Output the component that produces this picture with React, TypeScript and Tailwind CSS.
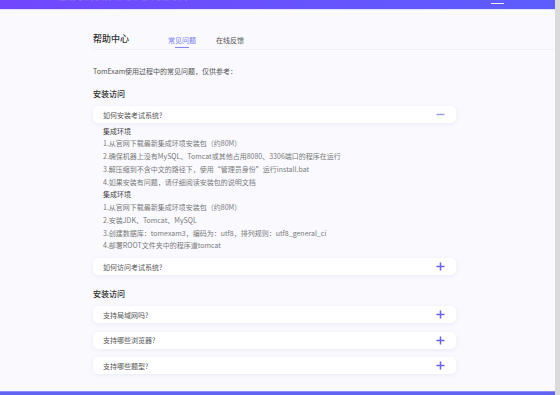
import React from "react";

const font = { fontFamily: '"Noto Sans CJK SC", "Noto Sans", sans-serif' };

function Plus() {
  return (
    <svg width="9" height="9" viewBox="0 0 9 9" className="shrink-0">
      <path d="M4.5 0.5v8M0.5 4.5h8" stroke="#6464f0" strokeWidth="1.5" />
    </svg>
  );
}

function Minus() {
  return (
    <svg width="9" height="9" viewBox="0 0 9 9" className="shrink-0">
      <path d="M0.5 4.5h8" stroke="#9c9cf4" strokeWidth="1.5" />
    </svg>
  );
}

function Card({ q, open }: { q: string; open?: boolean }) {
  return (
    <div className="w-[363px] h-[17px] bg-white rounded-[5px] shadow-[0_1px_4px_rgba(110,110,170,0.1)] pl-[10px] pr-[11px] flex items-center justify-between">
      <span className="text-[7px] leading-[10px] text-[#555]">{q}</span>
      {open ? <Minus /> : <Plus />}
    </div>
  );
}

const lines1 = [
  "1.从官网下载最新集成环境安装包（约80M）",
  "2.确保机器上没有MySQL、Tomcat或其他占用8080、3306端口的程序在运行",
  "3.解压缩到不含中文的路径下，使用“管理员身份”运行install.bat",
  "4.如果安装有问题，请仔细阅读安装包的说明文档",
];
const lines2 = [
  "1.从官网下载最新集成环境安装包（约80M）",
  "2.安装JDK、Tomcat、MySQL",
  "3.创建数据库：tomexam3，编码为：utf8，排列规则：utf8_general_ci",
  "4.部署ROOT文件夹中的程序道tomcat",
];

export default function App() {
  return (
    <div className="w-[560px] h-[395px] flex overflow-hidden bg-[#f9f9fe]" style={font}>
      <div className="flex-1 min-w-0 flex flex-col">
        <div className="h-[9px] shrink-0 overflow-hidden flex items-start bg-gradient-to-r from-[#7246fd] to-[#5c5dfd]">
          <span className="ml-[14px] -mt-[8.5px] text-[9px] leading-[9px] text-white/20 whitespace-nowrap">
            TomExam 在线考试系统 帮助中心 网络考试
          </span>
          <div className="ml-auto mr-[51px] mt-[2.5px] w-[13px] h-[1px] bg-white/90" />
        </div>
        <div className="h-px shrink-0 bg-[#e6e1fb]" />
        <div className="flex-1 min-h-0 pl-[93px] flex flex-col">
          <div className="h-[40px] shrink-0 flex items-end border-b border-[#efeff6]">
            <span className="text-[9px] leading-[12px] pb-[4px] text-[#333] font-medium">帮助中心</span>
            <div className="ml-[39px] flex flex-col items-center pb-[1px]">
              <span className="text-[7px] leading-[10px] text-[#7c7cf2]">常见问题</span>
              <div className="mt-[1.5px] w-[14px] h-[1.5px] bg-[#8586f4]" />
            </div>
            <div className="ml-[20px] flex flex-col items-center pb-[4px]">
              <span className="text-[7px] leading-[10px] text-[#555]">在线反馈</span>
            </div>
          </div>
          <div className="mt-[16px] text-[7px] leading-[10px] text-[#555]">
            TomExam使用过程中的常见问题，仅供参考：
          </div>
          <div className="mt-[11.5px] text-[8px] leading-[11px] text-[#333] font-medium">安装访问</div>
          <div className="mt-[7.5px]">
            <Card q="如何安装考试系统?" open />
          </div>
          <div className="pl-[10px] pt-[1.6px] flex flex-col">
            <div className="h-[12.75px] flex items-center text-[7px] text-[#444]">集成环境</div>
            {lines1.map((l) => (
              <div key={l} className="h-[12.75px] flex items-center text-[7px] text-[#7a7a7a] whitespace-nowrap">{l}</div>
            ))}
            <div className="h-[12.75px] flex items-center text-[7px] text-[#444]">集成环境</div>
            {lines2.map((l) => (
              <div key={l} className="h-[12.75px] flex items-center text-[7px] text-[#7a7a7a] whitespace-nowrap">{l}</div>
            ))}
          </div>
          <div className="mt-[6px]">
            <Card q="如何访问考试系统?" />
          </div>
          <div className="mt-[12.5px] text-[8px] leading-[11px] text-[#333] font-medium">安装访问</div>
          <div className="mt-[7.5px] flex flex-col gap-[8.5px]">
            <Card q="支持局域网吗?" />
            <Card q="支持哪些浏览器?" />
            <Card q="支持哪些题型?" />
          </div>
        </div>
        <div className="shrink-0 h-px bg-[#8b8cf8]" />
        <div className="shrink-0 h-[3px] bg-[#6163f3]" />
      </div>
      <div className="w-[5px] shrink-0 bg-[#dadada]" />
    </div>
  );
}
